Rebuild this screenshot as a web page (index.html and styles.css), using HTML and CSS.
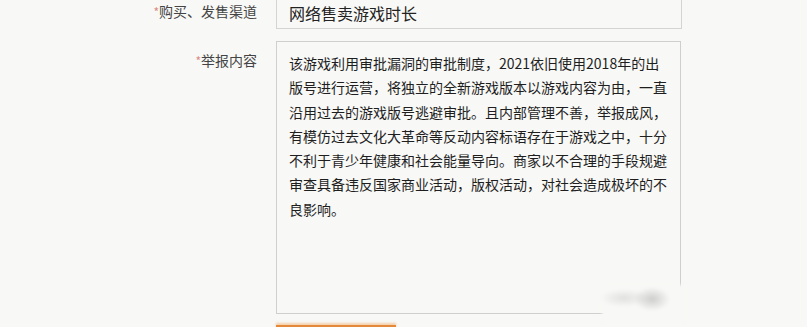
FILE: index.html
```html
<!DOCTYPE html>
<html lang="zh-CN">
<head>
    <meta charset="UTF-8">
    <meta name="viewport" content="width=device-width, initial-scale=1.0">
    <title>举报</title>
    <link rel="stylesheet" href="styles.css">
</head>
<body>
    <div class="form">
        <div class="row">
            <label class="label"><span class="star">*</span>购买、发售渠道</label>
            <div class="field">网络售卖游戏时长</div>
        </div>
        <div class="row">
            <label class="label label-top"><span class="star">*</span>举报内容</label>
            <div class="area-wrap">
                <div class="area">该游戏利用审批漏洞的审批制度，2021依旧使用2018年的出<br>版号进行运营，将独立的全新游戏版本以游戏内容为由，一直<br>沿用过去的游戏版号逃避审批。且内部管理不善，举报成风，<br>有模仿过去文化大革命等反动内容标语存在于游戏之中，十分<br>不利于青少年健康和社会能量导向。商家以不合理的手段规避<br>审查具备违反国家商业活动，版权活动，对社会造成极坏的不<br>良影响。</div>
                <div class="smudge"></div>
            </div>
        </div>
        <div class="row">
            <span class="label"></span>
            <button class="submit" aria-label="提交"></button>
        </div>
    </div>
</body>
</html>
```

FILE: styles.css
```css
body {
    margin: 0;
    background-color: #f8f8f6;
    font-family: "Microsoft YaHei", "Noto Sans CJK SC", sans-serif;
    color: #222;
    overflow: hidden;
}
.form {
    margin-top: -7px;
    display: flex;
    flex-direction: column;
    gap: 11px;
}
.row {
    display: flex;
    gap: 19px;
}
.label {
    width: 257px;
    flex-shrink: 0;
    text-align: right;
    font-size: 14px;
    color: #444;
    line-height: 36px;
}
.label-top {
    line-height: 20px;
    padding-top: 9px;
}
.star {
    color: #d98a8a;
    font-size: 12px;
}
.field {
    width: 392px;
    height: 34px;
    line-height: 38px;
    padding-left: 12px;
    border: 1px solid #d4d4d4;
    background-color: #f8f8f6;
    font-size: 16px;
    color: #222;
}
.area-wrap {
    position: relative;
}
.area {
    width: 381px;
    height: 262px;
    padding: 9px 10px 0 12px;
    border: 1px solid #cfcfcf;
    font-size: 14px;
    line-height: 24.3px;
    color: #1e1e1e;
    white-space: nowrap;
}
.smudge {
    position: absolute;
    left: 326px;
    top: 244px;
    width: 82px;
    height: 36px;
    background:
        radial-gradient(ellipse 18px 12px at 50px 14px, rgba(170, 170, 170, 0.55), transparent),
        radial-gradient(ellipse 24px 9px at 22px 13px, rgba(195, 195, 195, 0.45), transparent),
        #f8f8f6;
    filter: blur(1.5px);
}
.submit {
    width: 120px;
    height: 40px;
    border: none;
    background-color: #e4883a;
    box-shadow: 0 -2px 2px rgba(240, 170, 100, 0.5);
}
```
